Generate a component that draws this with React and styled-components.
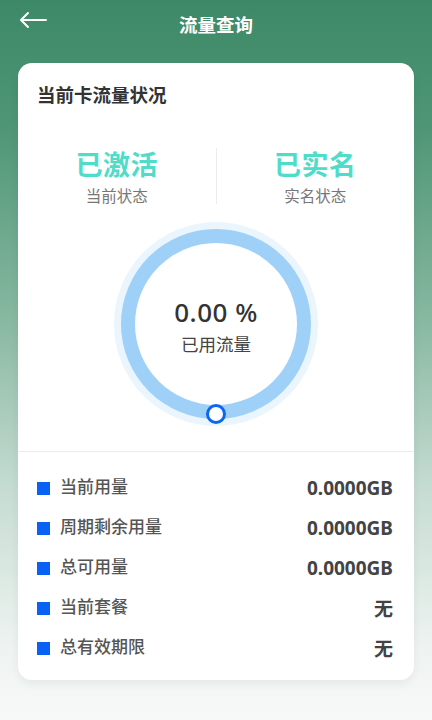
import React from "react";
import styled, { createGlobalStyle } from "styled-components";

const GlobalStyle = createGlobalStyle`
  html, body {
    margin: 0;
    padding: 0;
  }
  body {
    font-family: "Noto Sans CJK SC", "Noto Sans", sans-serif;
  }
`;

const Page = styled.div`
  min-height: 720px;
  width: 432px;
  background: linear-gradient(180deg, #3d8966 0%, #4f9677 18%, #89b9a2 45%, #c6dcd2 68%, #eef3f1 90%, #f7f9f8 100%);
  box-sizing: border-box;
  padding: 0 18px 40px;
`;

const Header = styled.div`
  position: relative;
  height: 48px;
  display: flex;
  align-items: center;
  justify-content: center;
`;

const Back = styled.div`
  position: absolute;
  left: 0;
  top: 8px;
  width: 30px;
  height: 24px;
  display: flex;
  align-items: center;
`;

const Title = styled.div`
  color: #fff;
  font-size: 18.5px;
  font-weight: 700;
`;

const Card = styled.div`
  margin-top: 15px;
  background: #fff;
  border-radius: 14px;
  box-shadow: 0 4px 10px rgba(0, 0, 0, 0.06);
  overflow: hidden;
`;

const CardTitle = styled.div`
  padding: 18px 19px 0;
  font-size: 18.5px;
  font-weight: 700;
  color: #333;
  line-height: 26px;
`;

const StatusRow = styled.div`
  display: flex;
  align-items: center;
  margin-top: 40px;
`;

const StatusCol = styled.div`
  flex: 1;
  display: flex;
  flex-direction: column;
  align-items: center;
`;

const VDivider = styled.div`
  width: 1px;
  height: 56px;
  background: #ececec;
`;

const StatusValue = styled.div`
  font-size: 27px;
  font-weight: 700;
  color: #4fdcc8;
  line-height: 34px;
  letter-spacing: 0.5px;
`;

const StatusLabel = styled.div`
  font-size: 15.5px;
  color: #777;
  line-height: 20px;
  margin-top: 4px;
`;

const RingWrap = styled.div`
  position: relative;
  width: 216px;
  height: 216px;
  margin: 11px auto 0;
`;

const RingCenter = styled.div`
  position: absolute;
  inset: 0;
  display: flex;
  flex-direction: column;
  align-items: center;
  justify-content: center;
  padding-top: 4px;
`;

const Percent = styled.div`
  font-size: 26px;
  font-weight: 500;
  color: #333;
  line-height: 32px;
  font-family: "Noto Sans", "Noto Sans CJK SC", sans-serif;
  letter-spacing: 0.5px;
`;

const RingLabel = styled.div`
  font-size: 17.5px;
  color: #444;
  line-height: 24px;
  margin-top: 4px;
`;

const HDivider = styled.div`
  height: 1px;
  background: #ececec;
  margin-top: 19px;
`;

const List = styled.div`
  padding: 16px 21px 12px 19px;
`;

const Row = styled.div`
  display: flex;
  align-items: center;
  height: 40px;
`;

const Marker = styled.span`
  width: 13px;
  height: 13px;
  background: #0a62f5;
  margin-right: 10px;
  flex-shrink: 0;
`;

const RowLabel = styled.span`
  font-size: 17px;
  font-weight: 500;
  color: #555;
  margin-top: -6px;
`;

const RowValue = styled.span`
  margin-left: auto;
  font-size: 19px;
  font-weight: 700;
  color: #444;
  font-family: "Noto Sans", "Noto Sans CJK SC", sans-serif;
`;

const rows = [
  ["当前用量", "0.0000GB"],
  ["周期剩余用量", "0.0000GB"],
  ["总可用量", "0.0000GB"],
  ["当前套餐", "无"],
  ["总有效期限", "无"],
];

function Ring() {
  return (
    <svg width="216" height="216" viewBox="0 0 216 216">
      <circle cx="108" cy="108" r="102" fill="#eaf5fe" />
      <circle cx="108" cy="108" r="95" fill="#9fd0f8" />
      <circle cx="108" cy="108" r="81" fill="#fff" />
      <circle cx="108" cy="198" r="8.5" fill="#fff" stroke="#0a66f5" strokeWidth="3" />
    </svg>
  );
}

export default function App() {
  return (
    <Page>
      <GlobalStyle />
      <Header>
        <Back>
          <svg width="30" height="18" viewBox="0 0 30 18">
            <path d="M28 9H3M10 2L3 9l7 7" fill="none" stroke="#fff" strokeWidth="2" strokeLinecap="round" strokeLinejoin="round" />
          </svg>
        </Back>
        <Title>流量查询</Title>
      </Header>
      <Card>
        <CardTitle>当前卡流量状况</CardTitle>
        <StatusRow>
          <StatusCol>
            <StatusValue>已激活</StatusValue>
            <StatusLabel>当前状态</StatusLabel>
          </StatusCol>
          <VDivider />
          <StatusCol>
            <StatusValue>已实名</StatusValue>
            <StatusLabel>实名状态</StatusLabel>
          </StatusCol>
        </StatusRow>
        <RingWrap>
          <Ring />
          <RingCenter>
            <Percent>0.00 %</Percent>
            <RingLabel>已用流量</RingLabel>
          </RingCenter>
        </RingWrap>
        <HDivider />
        <List>
          {rows.map(([label, value]) => (
            <Row key={label}>
              <Marker />
              <RowLabel>{label}</RowLabel>
              <RowValue>{value}</RowValue>
            </Row>
          ))}
        </List>
      </Card>
    </Page>
  );
}
